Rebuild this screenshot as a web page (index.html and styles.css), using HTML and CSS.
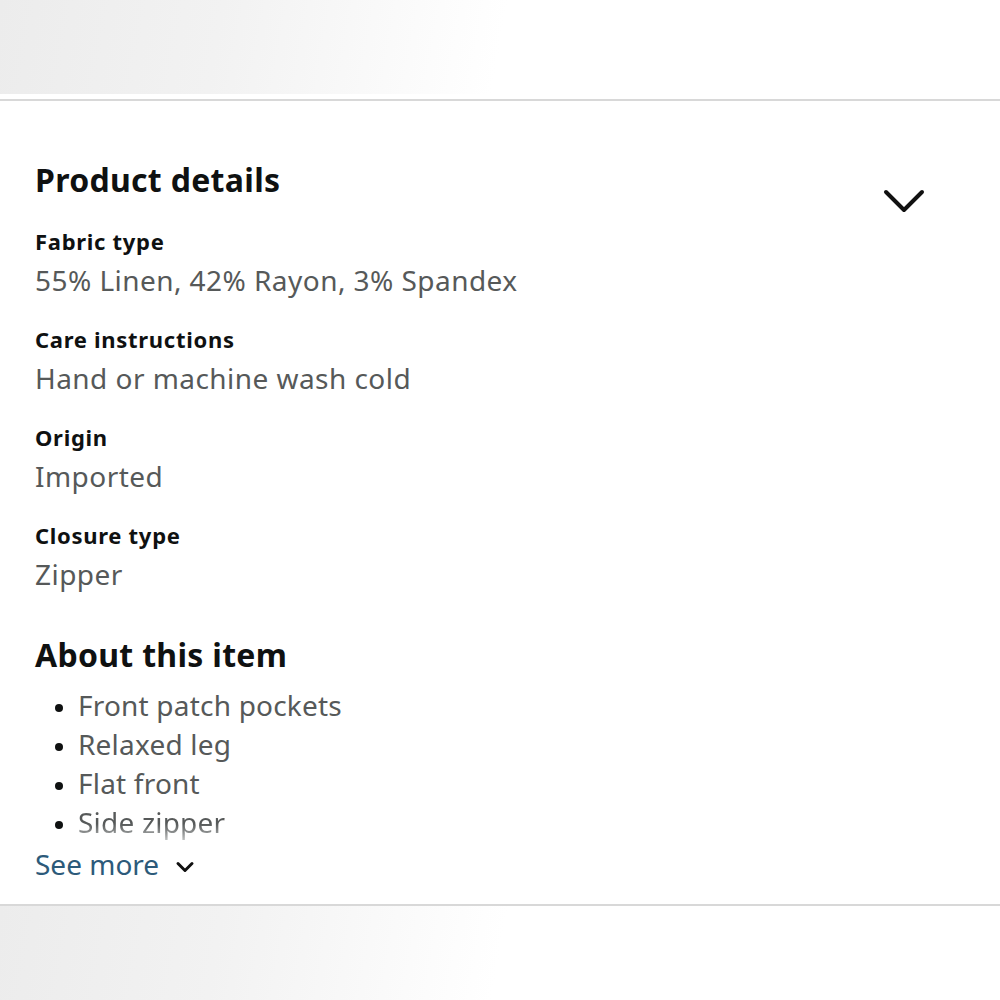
FILE: index.html
```html
<!DOCTYPE html>
<html>
<head>
<meta charset="utf-8">
<link rel="stylesheet" href="styles.css">
</head>
<body>
<div class="strip strip-top"></div>
<div class="gap"></div>
<section class="panel">
  <div class="head">
    <h2 class="title">Product details</h2>
    <svg class="chev-big" width="42" height="26" viewBox="0 0 42 26"><path d="M3 4 L21 22 L39 4" fill="none" stroke="#111" stroke-width="4" stroke-linecap="round" stroke-linejoin="round"/></svg>
  </div>
  <div class="rows">
    <div class="row"><div class="label">Fabric type</div><div class="value">55% Linen, 42% Rayon, 3% Spandex</div></div>
    <div class="row"><div class="label">Care instructions</div><div class="value">Hand or machine wash cold</div></div>
    <div class="row"><div class="label">Origin</div><div class="value">Imported</div></div>
    <div class="row"><div class="label">Closure type</div><div class="value">Zipper</div></div>
  </div>
  <h2 class="title about">About this item</h2>
  <ul class="bullets">
    <li>Front patch pockets</li>
    <li>Relaxed leg</li>
    <li>Flat front</li>
    <li><span class="fade">Side zipper</span></li>
  </ul>
  <div class="more"><span>See more</span><svg class="chev-small" width="20" height="14" viewBox="0 0 20 14"><path d="M3 3.5 L10 10.5 L17 3.5" fill="none" stroke="#111" stroke-width="3" stroke-linecap="round" stroke-linejoin="round"/></svg></div>
</section>
<div class="strip strip-bottom"></div>
</body>
</html>
```
FILE: styles.css
```css
html, body {
  margin: 0;
  padding: 0;
  background: #fff;
}
body {
  width: 1000px;
  height: 1000px;
  overflow: hidden;
  font-family: "Noto Sans", "Open Sans", sans-serif;
  color: #0f1111;
}
.strip {
  background: linear-gradient(100deg, #ececec 0%, #f2f2f2 22%, #ffffff 50%, #ffffff 100%);
}
.strip-top {
  height: 94px;
}
.gap {
  height: 5px;
  background: #fff;
  border-bottom: 2px solid #d8d8d8;
}
.panel {
  height: 805px;
  box-sizing: border-box;
  padding: 59px 35px 0 35px;
  border-bottom: 2px solid #d8d8d8;
  overflow: hidden;
}
.head {
  display: flex;
  justify-content: space-between;
  align-items: flex-start;
}
.title {
  margin: 0;
  font-size: 32px;
  line-height: 40px;
  font-weight: 700;
  color: #0f1111;
  letter-spacing: 0.3px;
}
.chev-big {
  margin-top: 28px;
  margin-right: 40px;
}
.rows {
  display: flex;
  flex-direction: column;
  gap: 25px;
  margin-top: 13px;
}
.row {
  display: flex;
  flex-direction: column;
  gap: 5px;
}
.label {
  font-size: 22px;
  line-height: 28px;
  font-weight: 700;
  color: #0f1111;
  letter-spacing: 0.7px;
}
.value {
  font-size: 28px;
  line-height: 40px;
  color: #565959;
  letter-spacing: 0.45px;
}
.about {
  margin-top: 41px;
}
.bullets {
  margin: 11px 0 0 0;
  padding: 0 0 0 43px;
  font-size: 28px;
  line-height: 39px;
  color: #565959;
  letter-spacing: 0.2px;
}
.bullets li::marker {
  color: #0f1111;
  font-size: 22px;
}
.bullets .fade {
  background: linear-gradient(to bottom, #565959 55%, #c4c6c6 100%);
  -webkit-background-clip: text;
  background-clip: text;
  color: transparent;
}
.more {
  display: flex;
  align-items: center;
  gap: 16px;
  margin-top: 2px;
  font-size: 28px;
  line-height: 40px;
  color: #2c5a7a;
}
.chev-small {
  margin-top: 6px;
}
.strip-bottom {
  height: 94px;
}
```
